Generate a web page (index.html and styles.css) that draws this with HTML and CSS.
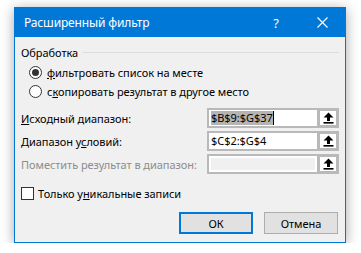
FILE: index.html
```html
<!DOCTYPE html>
<html lang="ru">
<head>
    <meta charset="UTF-8">
    <title>Расширенный фильтр</title>
    <link rel="stylesheet" href="styles.css">
</head>
<body>
    <div class="dialog">
        <div class="titlebar">
            <span class="title">Расширенный фильтр</span>
            <span class="tb-btn">?</span>
            <span class="tb-btn">
                <svg width="11" height="11" viewBox="0 0 11 11"><path d="M0.5 0.5 L10.5 10.5 M10.5 0.5 L0.5 10.5" stroke="#fff" stroke-width="1.1" fill="none"/></svg>
            </span>
        </div>

        <div class="content">
            <div class="group-head">
                <span>Обработка</span>
                <span class="group-line"></span>
            </div>

            <label class="radio-row first">
                <span class="radio checked"></span>
                <span><u>ф</u>ильтровать список на месте</span>
            </label>
            <label class="radio-row">
                <span class="radio"></span>
                <span>с<u>к</u>опировать результат в другое место</span>
            </label>

            <div class="field-row first">
                <span class="field-label"><u>И</u>сходный диапазон:</span>
                <div class="ref-edit">
                    <div class="ref-text"><span class="selected">$B$9:$G$37</span><span class="caret"></span></div>
                    <div class="ref-btn">
                        <svg width="11" height="12" viewBox="0 0 11 12"><path d="M5.5 0.5 L10.5 5.5 L7 5.5 L7 9 L4 9 L4 5.5 L0.5 5.5 Z" fill="#000"/><rect x="0.5" y="10" width="10" height="1.6" fill="#000"/></svg>
                    </div>
                </div>
            </div>
            <div class="field-row">
                <span class="field-label">Диапазон у<u>с</u>ловий:</span>
                <div class="ref-edit">
                    <div class="ref-text">$C$2:$G$4</div>
                    <div class="ref-btn">
                        <svg width="11" height="12" viewBox="0 0 11 12"><path d="M5.5 0.5 L10.5 5.5 L7 5.5 L7 9 L4 9 L4 5.5 L0.5 5.5 Z" fill="#000"/><rect x="0.5" y="10" width="10" height="1.6" fill="#000"/></svg>
                    </div>
                </div>
            </div>
            <div class="field-row">
                <span class="field-label disabled">Поместить результат в диапазон:</span>
                <div class="ref-edit">
                    <div class="ref-text off"><div class="off-fill"></div></div>
                    <div class="ref-btn">
                        <svg width="11" height="12" viewBox="0 0 11 12"><path d="M5.5 0.5 L10.5 5.5 L7 5.5 L7 9 L4 9 L4 5.5 L0.5 5.5 Z" fill="#000"/><rect x="0.5" y="10" width="10" height="1.6" fill="#000"/></svg>
                    </div>
                </div>
            </div>

            <label class="check-row">
                <span class="checkbox"></span>
                <span>Только у<u>н</u>икальные записи</span>
            </label>

            <div class="buttons">
                <span class="btn default">ОК</span>
                <span class="btn">Отмена</span>
            </div>
        </div>
    </div>
</body>
</html>
```

FILE: styles.css
```css
/* --- Page --- */
body {
    margin: 0;
    background-color: #fff;
    font-family: 'Noto Sans', 'Open Sans', sans-serif;
    font-size: 11px;
    letter-spacing: -0.05px;
    color: #000;
}

/* --- Dialog window --- */
.dialog {
    margin: 7px 0 0 14px;
    width: 332px;
    height: 236px;
    box-sizing: border-box;
    border: 1px solid #0078d7;
    background-color: #f0f0f0;
    box-shadow: 0 2px 12px rgba(0, 0, 0, 0.35);
    display: flex;
    flex-direction: column;
}

.titlebar {
    height: 29px;
    background-color: #0078d7;
    color: #fff;
    display: flex;
    align-items: center;
}

.title {
    flex: 1;
    padding-left: 9px;
    font-size: 12px;
    letter-spacing: -0.15px;
}

.tb-btn {
    width: 46px;
    height: 29px;
    display: flex;
    justify-content: center;
    align-items: center;
    font-size: 13px;
}

/* --- Content --- */
.content {
    padding: 0 6px;
    display: flex;
    flex-direction: column;
    white-space: nowrap;
}

.group-head {
    margin-top: 7px;
    height: 16px;
    display: flex;
    align-items: center;
}

.group-line {
    flex: 1;
    height: 1px;
    margin-left: 5px;
    background-color: #dcdcdc;
}

.radio-row {
    height: 16px;
    margin-top: 3px;
    padding-left: 8px;
    display: flex;
    align-items: center;
}

.radio-row.first {
    margin-top: 4px;
}

.radio {
    width: 11px;
    height: 11px;
    border: 1px solid #333;
    border-radius: 50%;
    background-color: #fff;
    margin-right: 5px;
    display: flex;
    justify-content: center;
    align-items: center;
}

.radio.checked::after {
    content: "";
    width: 7px;
    height: 7px;
    border-radius: 50%;
    background-color: #333;
}

/* --- Range fields --- */
.field-row {
    height: 20px;
    margin-top: 3px;
    display: flex;
    align-items: center;
}

.field-row.first {
    margin-top: 9px;
}

.field-label {
    width: 186px;
}

.field-label.disabled {
    color: #8c8c8c;
}

.ref-edit {
    display: flex;
    height: 20px;
}

.ref-text {
    width: 110px;
    box-sizing: border-box;
    border: 2px solid #b9b9b9;
    border-right: none;
    background-color: #fff;
    padding-left: 2px;
    display: flex;
    align-items: center;
    line-height: 14px;
}

.ref-text .selected {
    background-color: #b4b4b4;
}

.caret {
    width: 1px;
    height: 14px;
    background-color: #000;
}

.ref-text.off {
    padding: 2px;
}

.off-fill {
    flex: 1;
    align-self: stretch;
    background-color: #f0f0f0;
}

.ref-btn {
    width: 22px;
    box-sizing: border-box;
    border: 3px solid #b9b9b9;
    background-color: #fff;
    display: flex;
    justify-content: center;
    align-items: center;
}

/* --- Checkbox --- */
.check-row {
    height: 16px;
    margin-top: 11px;
    display: flex;
    align-items: center;
}

.checkbox {
    width: 11px;
    height: 11px;
    border: 1px solid #333;
    background-color: #fff;
    margin-right: 4px;
}

/* --- Buttons --- */
.buttons {
    margin-top: 11px;
    padding-right: 1px;
    display: flex;
    justify-content: flex-end;
    gap: 11px;
}

.btn {
    width: 74px;
    height: 22px;
    box-sizing: border-box;
    border: 1px solid #adadad;
    background-color: #e1e1e1;
    display: flex;
    justify-content: center;
    align-items: center;
}

.btn.default {
    border: 2px solid #0078d7;
}
```
